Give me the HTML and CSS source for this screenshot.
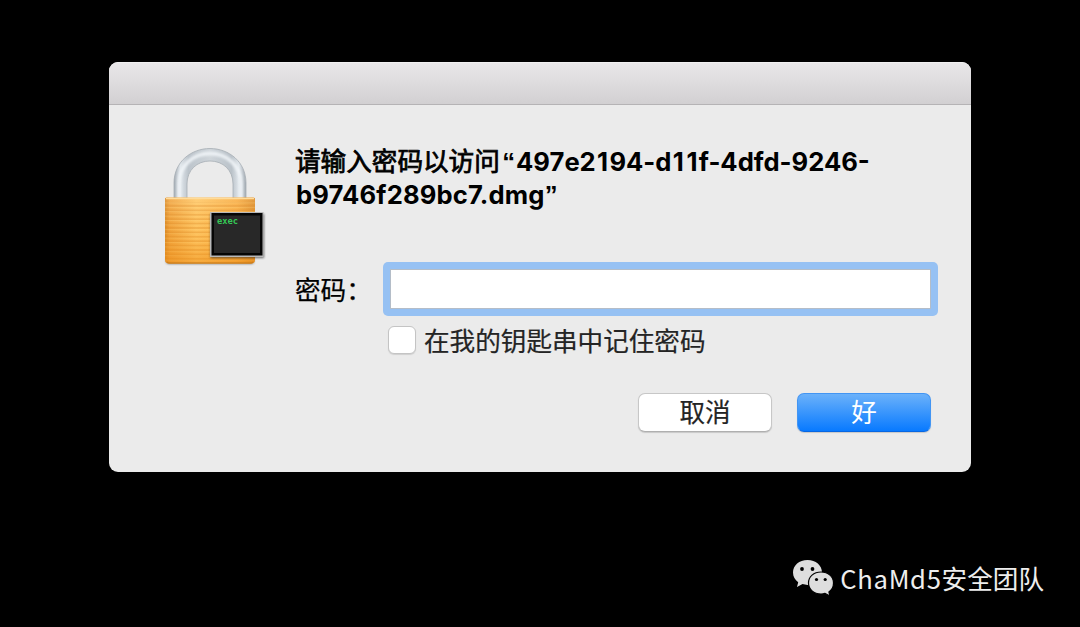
FILE: index.html
```html
<!DOCTYPE html>
<html lang="zh-CN">
<head>
<meta charset="utf-8">
<title>密码</title>
<link rel="stylesheet" href="styles.css">
</head>
<body>
<main class="dialog">
  <header class="titlebar"></header>
  <div class="content">
    <svg class="lock" width="104" height="122" viewBox="0 0 104 122">
      <defs>
        <linearGradient id="steel" x1="0" x2="1" y1="0" y2="0">
          <stop offset="0" stop-color="#a5adb5"/><stop offset=".09" stop-color="#dfe5ea"/><stop offset=".2" stop-color="#bcc4cb"/>
          <stop offset=".5" stop-color="#cfd5da"/><stop offset=".8" stop-color="#bac2c9"/><stop offset=".9" stop-color="#e0e6eb"/><stop offset="1" stop-color="#a2aab2"/>
        </linearGradient>
        <linearGradient id="brass" x1="0" x2="1" y1="0" y2="0">
          <stop offset="0" stop-color="#d98a27"/><stop offset=".05" stop-color="#f0a23c"/><stop offset=".35" stop-color="#ffc663"/>
          <stop offset=".8" stop-color="#f9ad42"/><stop offset="1" stop-color="#dd8c27"/>
        </linearGradient>
        <linearGradient id="shade" x1="0" x2="0" y1="0" y2="1">
          <stop offset="0" stop-color="#fff" stop-opacity=".12"/><stop offset=".5" stop-color="#f59a20" stop-opacity=".05"/><stop offset="1" stop-color="#ec8b13" stop-opacity=".5"/>
        </linearGradient>
        <pattern id="grooves" width="4" height="4.4" patternUnits="userSpaceOnUse">
          <rect y="1.2" width="4" height="1.2" fill="#d98622" opacity=".5"/>
          <rect y="2.6" width="4" height="1" fill="#ffda80" opacity=".3"/>
        </pattern>
        <filter id="soft" x="-20%" y="-20%" width="140%" height="140%"><feGaussianBlur stdDeviation="1.1"/></filter>
      </defs>
      <path d="M10 55V36C10 15 27 1.500 46 1.500s36 13.500 36 34.500v19H69V37c0-14-10-23-23-23S23 23 23 37v18Z" fill="url(#steel)" stroke="#a6adb4" stroke-width=".8"/>
      <path d="M15 53V36C15 18 30 6.500 46 6.500S77 18 77 36v17" fill="none" stroke="#f3f7fa" stroke-width="4" opacity=".8" filter="url(#soft)"/>
      <rect x="2" y="110" width="88" height="7" rx="3" fill="#444" opacity=".65" filter="url(#soft)"/>
      <path d="M1 52q0-1.500 1.500-1.500h87q1.500 0 1.500 1.500v60.500q0 4-4 4H5q-4 0-4-4Z" fill="url(#brass)"/>
      <path d="M1 55h90v57.500q0 4-4 4H5q-4 0-4-4Z" fill="url(#grooves)"/>
      <path d="M1 52h90v60.500q0 4-4 4H5q-4 0-4-4Z" fill="url(#shade)"/>
      <path d="M2 51.500h88" stroke="#ffdc9b" stroke-width="1.500"/>
      <path d="M3 115q1 1 3 1h80q2 0 3-1" fill="none" stroke="#c57a1c"/>
      <rect x="46.500" y="67" width="53.500" height="44" fill="#222" opacity=".65" filter="url(#soft)"/>
      <rect x="46" y="65" width="53.500" height="45" fill="#b9b9b9"/>
      <rect x="47.500" y="66" width="51" height="42.500" fill="#050505"/>
      <rect x="50" y="68.500" width="46" height="37.500" fill="#282828"/>
      <text x="53" y="77" class="exec" textLength="21" lengthAdjust="spacingAndGlyphs">exec</text>
    </svg>
    <div class="form">
      <h1 class="heading">
        <span class="line"><span class="han">请输入密码以访问</span><span class="quote open">“</span>497e2<span class="one">1</span>94-d<span class="one">1</span><span class="one">1</span>f-4dfd-9246-</span>
        <span class="line second">b9746f289bc7.dmg<span class="quote">”</span></span>
      </h1>
      <div class="field">
        <label class="label" for="pw">密码：</label>
        <div class="ring"><input class="input" id="pw" type="password"></div>
      </div>
      <label class="remember"><span class="box"></span>在我的钥匙串中记住密码</label>
      <div class="actions">
        <button class="button">取消</button>
        <button class="button primary">好</button>
      </div>
    </div>
  </div>
</main>
<footer class="credit">
  <svg class="wechat" width="42" height="38" viewBox="0 0 42 38">
    <path d="M15.500 1C7.200 1 1 6.400 1 13.500c0 4 2 7.500 5.200 9.800L5 28l5.500-2.900c1.600.5 3.300.8 5 .8 8.300 0 14.500-5.600 14.500-12.500S23.800 1 15.500 1Z" fill="#dedede"/>
    <path d="M29 13c-7.300 0-12.500 4.800-12.500 11S21.700 35 29 35c1.400 0 2.700-.2 4-.6l5 2.600-1.100-4c2.900-2 4.600-5.300 4.600-9 0-6.200-5.200-11-12.500-11Z" fill="#dedede" stroke="#000" stroke-width="1.200"/>
    <g fill="#000"><circle cx="10" cy="10" r="1.900"/><circle cx="20.500" cy="10" r="1.900"/><circle cx="24.500" cy="20.500" r="1.600"/><circle cx="33.200" cy="20.500" r="1.600"/></g>
  </svg>
  <span class="team"><span class="name">ChaMd5</span>安全团队</span>
</footer>
</body>
</html>
```
FILE: styles.css
```css
* { box-sizing: border-box; }
body {
  margin: 0;
  height: 627px;
  padding: 62px 109px 0;
  overflow: hidden;
  background: #000;
  color: #000;
  font-family: "Noto Sans CJK SC", sans-serif;
}
.dialog {
  width: 862px;
  height: 409.500px;
  overflow: hidden;
  border-radius: 9px;
  background: #ebebeb;
}
.titlebar {
  height: 43px;
  background: linear-gradient(#e9e7e9, #d2d0d2);
  border-top: 1px solid #f1f0f1;
  border-bottom: 1px solid #b5b3b5;
}
.content {
  display: flex;
  padding: 40px 40px 0 55px;
}
.lock { flex: none; margin-top: 2px; }
.exec { font: bold 8px "DejaVu Sans Mono", monospace; fill: #35c956; }
.form { flex: 1; margin-left: 28px; }
.heading {
  height: 66px;
  margin: 0;
  font: 700 25.600px/33px "Inter", "Noto Sans CJK SC", sans-serif;
  white-space: nowrap;
}
.line { display: block; height: 33px; }
.second { letter-spacing: .15px; }
.han {
  margin-left: -1px;
  font-family: "Noto Sans CJK SC", sans-serif;
  font-weight: 400;
  line-height: 30px;
  -webkit-text-stroke: .75px #000;
}
.one { margin: 0 1.300px; }
.quote { font-family: "Liberation Sans", Arial, sans-serif; font-weight: 700; line-height: 1; }
.open { margin: 0 1px 0 2.500px; }
.field {
  display: flex;
  align-items: center;
  margin-top: 58px;
}
.label {
  width: 88px;
  margin-left: -1px;
  font-size: 25.600px;
  line-height: 40px;
  white-space: nowrap;
  -webkit-text-stroke: .25px #000;
}
.ring {
  margin: -7px -7px -7px 0;
  padding: 7px;
  border-radius: 5px;
  background: #96c1f3;
}
.input {
  display: block;
  width: 541px;
  height: 40px;
  padding: 0 6px;
  border: 1px solid #b4bdc8;
  background: #fff;
  outline: none;
}
.remember {
  display: flex;
  align-items: center;
  height: 36px;
  margin: 13px 0 0 92px;
  font-size: 25.600px;
  line-height: 34px;
  color: #242424;
  -webkit-text-stroke: .2px #242424;
}
.box {
  width: 28px;
  height: 28px;
  margin-right: 8px;
  border: 1px solid #c4c4c4;
  border-radius: 6px;
  background: #fff;
  box-shadow: 0 1px 1px #d0d0d0;
}
.actions { display: flex; justify-content: flex-end; gap: 25px; margin-top: 35px; }
.button {
  width: 134px;
  height: 39px;
  padding: 0 0 3px;
  border: 1px solid #c7c7c7;
  border-bottom-color: #afafaf;
  border-radius: 7px;
  background: #fff;
  box-shadow: 0 1px 1px #c8c8c8;
  color: #242424;
  font: 25.600px/34px "Noto Sans CJK SC", sans-serif;
  -webkit-text-stroke: .2px currentColor;
}
.primary {
  border: 1px solid #4295f3;
  border-bottom-color: #0867e2;
  background: linear-gradient(#6bb1fa, #087aff);
  color: #fff;
  -webkit-text-stroke: 0;
}
.credit {
  display: flex;
  justify-content: flex-end;
  align-items: center;
  height: 40px;
  margin: 86px -73px 0 0;
  gap: 6px;
  color: #eee;
  font-size: 25.600px;
  line-height: 38px;
  white-space: nowrap;
}
.name { letter-spacing: .7px; }
```
